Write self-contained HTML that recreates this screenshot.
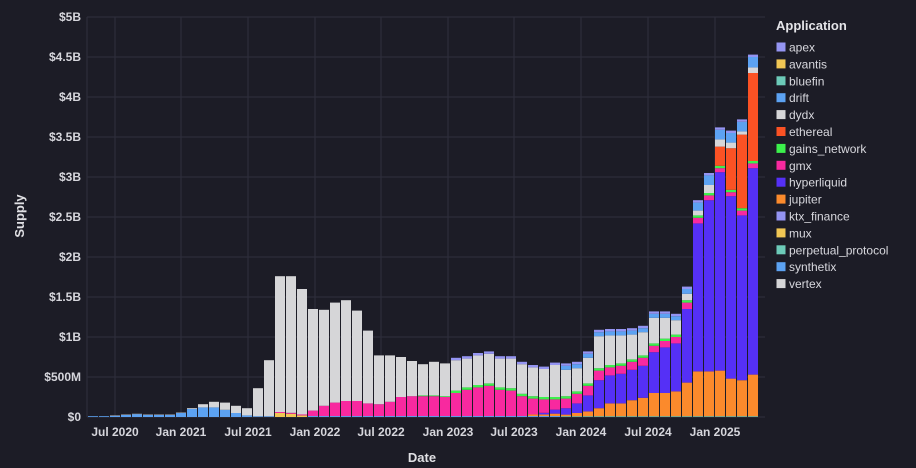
<!DOCTYPE html>
<html><head><meta charset="utf-8"><style>
html,body{margin:0;padding:0;background:#1c1c26;}
body{width:916px;height:468px;overflow:hidden;position:relative;font-family:"Liberation Sans",sans-serif;}
svg{position:absolute;left:0;top:0;}
</style></head><body>
<svg id="c" width="916" height="468" xmlns="http://www.w3.org/2000/svg" font-family="Liberation Sans, sans-serif">
<rect width="916" height="468" fill="#1c1c26"/>
<g id="grid"></g><g id="bars"></g><g id="labels" fill="#d6d6dc" font-size="12" font-weight="bold"></g>
<text x="0" y="0" transform="translate(24,216) rotate(-90)" text-anchor="middle" fill="#e0e0e4" font-size="13" font-weight="bold">Supply</text>
<text x="422" y="462" text-anchor="middle" fill="#e0e0e4" font-size="13" font-weight="bold">Date</text>
<g id="legend"></g>
</svg>
<script>
(function(){
var NS="http://www.w3.org/2000/svg";
function el(p,t,a,txt){var e=document.createElementNS(NS,t);for(var k in a)e.setAttribute(k,a[k]);if(txt)e.textContent=txt;p.appendChild(e);return e;}
var grid=document.getElementById('grid'),bars=document.getElementById('bars'),lab=document.getElementById('labels'),leg=document.getElementById('legend');
var Y0=417,S=80;
var yl=['$0','$500M','$1B','$1.5B','$2B','$2.5B','$3B','$3.5B','$4B','$4.5B','$5B'];
for(var i=0;i<=10;i++){var y=Y0-i*40;el(grid,'line',{x1:87,x2:765,y1:y,y2:y,stroke:'#2f2f3d','stroke-width':1});el(lab,'text',{x:81,y:y+4,'text-anchor':'end'},yl[i]);}
var xt=[[115,'Jul 2020'],[181,'Jan 2021'],[248,'Jul 2021'],[315,'Jan 2022'],[381,'Jul 2022'],[448,'Jan 2023'],[514,'Jul 2023'],[581,'Jan 2024'],[648,'Jul 2024'],[715,'Jan 2025']];
xt.forEach(function(t){el(grid,'line',{x1:t[0],x2:t[0],y1:17,y2:417,stroke:'#2f2f3d','stroke-width':1});el(lab,'text',{x:t[0],y:436,'text-anchor':'middle'},t[1]);});
el(grid,'line',{x1:87,x2:87,y1:17,y2:417,stroke:'#2f2f3d'});
var C={apex:'#9494f2',avantis:'#f0c654',bluefin:'#6ccab8',drift:'#5ca2f2',dydx:'#d6d6d8',ethereal:'#fb5224',gains:'#3cf04c',gmx:'#f8299f',hyper:'#5530f6',jup:'#fb8a2c',gray:'#d6d6d8'};
var tot=[.01,.01,.02,.03,.04,.03,.03,.03,.055,.11,.16,.19,.18,.14,.11,.36,.71,1.76,1.76,1.60,1.35,1.34,1.43,1.46,1.33,1.08,.77,.77,.75,.70,.66,.69,.67,.74,.76,.80,.82,.76,.76,.69,.65,.63,.68,
.67,.69,.82,1.09,1.10,1.10,1.11,1.14,1.32,1.32,1.29,1.63,2.71,3.05,3.62,3.58,3.72,4.53];
var drift=[.01,.01,.015,.025,.035,.025,.025,.025,.05,.10,.12,.12,.09,.05,.02,.01,.01];
var pinkTop={20:.08,21:.14,22:.18,23:.2,24:.2,25:.17,26:.16,27:.19,28:.25,29:.26,30:.26,31:.26,32:.25,33:.30,34:.34,35:.37,36:.39,37:.34,38:.33,39:.26,40:.23,41:.22,42:.22};
var ptop=[.11,.17,.27,.46,.52,.54,.59,.64,.81,.87,.92,1.35,2.42,2.71,3.06,2.76,2.52,3.11];
var oran={43:.03,44:.05,45:.07,46:.11,47:.17,48:.17,49:.21,50:.24,51:.30,52:.30,53:.32,54:.43,55:.57,56:.57,57:.58,58:.48,59:.46,60:.53};
var pink=[.12,.12,.12,.12,.1,.1,.1,.1,.08,.08,.08,.08,.07,.06,.05,.05,.06,.06];
var redTop={57:3.38,58:3.36,59:3.53,60:4.30};
for(var i=0;i<tot.length;i++){
 var segs=[],T=tot[i];
 if(i<17){segs.push([C.drift,drift[i]]);segs.push([C.gray,Math.max(0,T-drift[i])]);}
 else if(i<20){var yv=[.05,.04,.02][i-17];segs.push([C.avantis,yv]);segs.push([C.gmx,.012]);segs.push([C.gray,T-yv-.012]);}
 else if(i<43){var k=pinkTop[i];var base=.012;segs.push([C.drift,base]);var used=base;
   if(i>=40){var o=i==42?.03:.02;segs.push([C.jup,o]);used+=o;var pp=i==40?0:(i==41?.02:.05);segs.push([C.hyper,pp]);used+=pp;}
   segs.push([C.gmx,k-used]);var g=i>=33?.03:(i>=30?.01:0);segs.push([C.gains,g]);var l=i>=33?.03:0;
   segs.push([C.gray,T-k-g-l]);segs.push([C.apex,l]);}
 else{var j=i-43,o=oran[i],P=ptop[j],k=pink[j],g=.03,B=i>=55?(i==60?.13:.12):(i==54?.06:.05),L=.03;
   if(i==55)B=.1;
   segs.push([C.bluefin,.01]);segs.push([C.jup,o-.01]);segs.push([C.hyper,P-o]);segs.push([C.gmx,k]);segs.push([C.gains,g]);
   var topv=P+k+g;
   if(redTop[i]){segs.push([C.ethereal,redTop[i]-topv]);topv=redTop[i];}
   segs.push([C.gray,Math.max(0,T-topv-B-L)]);segs.push([C.drift,B]);segs.push([C.apex,L]);}
 var x=88+i*11,yy=Y0;
 segs.forEach(function(s){if(!(s[1]>0))return;var h=s[1]*S;yy-=h;el(bars,'rect',{x:x,y:yy.toFixed(2),width:10,height:h.toFixed(2),fill:s[0]});});
}
el(leg,'text',{x:776,y:30,fill:'#e4e4e8','font-size':13,'font-weight':'bold'},'Application');
var items=[['apex',C.apex],['avantis',C.avantis],['bluefin',C.bluefin],['drift',C.drift],['dydx',C.dydx],['ethereal',C.ethereal],['gains_network',C.gains],['gmx',C.gmx],['hyperliquid',C.hyper],['jupiter',C.jup],['ktx_finance',C.apex],['mux',C.avantis],['perpetual_protocol',C.bluefin],['synthetix',C.drift],['vertex',C.gray]];
items.forEach(function(t,n){var y=47+n*16.9;el(leg,'rect',{x:776.5,y:y-4.5,width:9,height:9,fill:t[1]});el(leg,'text',{x:789,y:y+4.5,fill:'#d8d8de','font-size':12},t[0]);});
})();
</script>
</body></html>
